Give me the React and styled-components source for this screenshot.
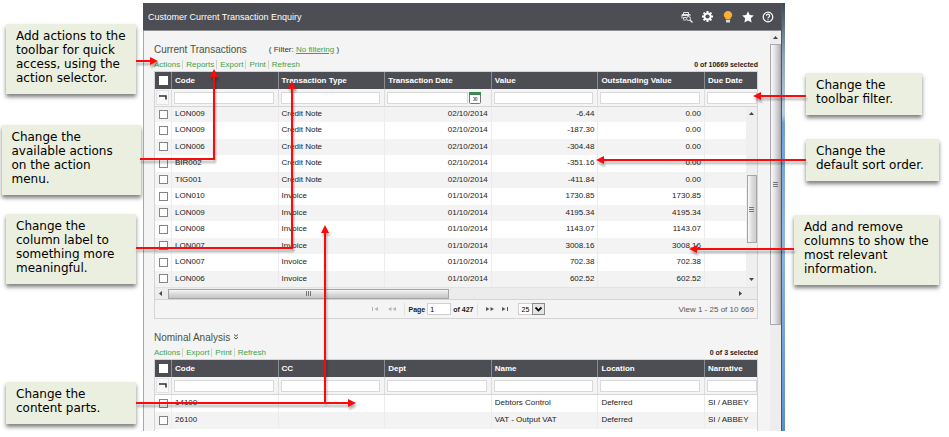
import React from "react";
import styled, { createGlobalStyle } from "styled-components";

const GlobalStyle = createGlobalStyle`
  * {
    box-sizing: border-box;
  }
  body {
    margin: 0;
    background: #fff;
    color: #222;
    font-family: "Liberation Sans", Arial, sans-serif;
    font-size: 8px;
  }
  input, select, button {
    font: inherit;
    margin: 0;
  }
`;

const Page = styled.div`
  position: relative;
  display: grid;
  grid-template-columns: 143px minmax(0, 1fr) 164px;
  padding-top: 3px;
`;

// Notes on both sides of the window

const Notes = styled.aside`
  display: flex;
  flex-direction: column;
  align-items: ${(p) => (p.$side === "left" ? "center" : "flex-start")};
  padding: ${(p) => (p.$side === "left" ? "21px 1px 0 0" : "70px 0 0 9px")};
`;

const Note = styled.p`
  width: ${(p) => p.$width}px;
  margin: ${(p) => p.$gap || 0}px 0 0 ${(p) => p.$indent || 0}px;
  padding: 5px 0 9px 10px;
  background: #ebefdf;
  color: #000;
  box-shadow: 0 3px 4px rgba(0, 0, 0, 0.5);
  font-family: "DejaVu Sans", Verdana, sans-serif;
  font-size: 12px;
  line-height: 14px;
  white-space: pre-line;
`;

const Arrows = styled.svg`
  position: absolute;
  top: 0;
  ${(p) => p.$side}: 0;
  overflow: visible;
  pointer-events: none;
  fill: none;
  stroke: #fa0a0a;
  stroke-width: 2;
  filter: drop-shadow(1px 3px 1px rgba(0, 0, 0, 0.3));

  polygon {
    fill: #fa0a0a;
    stroke: none;
  }
`;

// Application window

const Window = styled.main`
  display: flex;
  min-width: 0;
  background: #f4f4f4;
`;

const WindowMain = styled.div`
  flex: 1;
  min-width: 0;
`;

const WindowEdge = styled.div`
  width: 4px;
  border-left: 1px solid #4c5a68;
  background: linear-gradient(#3f4a55, #8fa3b8 12%, #b9cde2 26%, #6f9fd0 28%, #8fb6de 55%, #5f90c4);
`;

const TitleBar = styled.header`
  display: flex;
  align-items: center;
  justify-content: space-between;
  height: 28px;
  padding: 0 7px 0 5px;
  border-bottom: 1px solid #8d8e91;
  background: #4d4e53;
`;

const Title = styled.h1`
  margin: 0;
  color: #fff;
  font-size: 9px;
  font-weight: normal;
`;

const Tools = styled.div`
  display: flex;
  align-items: center;
  gap: 8px;
`;

const ToolButton = styled.button`
  display: flex;
  padding: 0;
  border: 0;
  background: none;
`;

const Body = styled.div`
  display: flex;
  border-left: 1px solid #a8a8a8;
`;

const Content = styled.div`
  flex: 1;
  min-width: 0;
  padding: 10px 12px 0 10px;
`;

const Part = styled.section`
  margin-bottom: ${(p) => p.$space || 0}px;
`;

const PartHeading = styled.div`
  display: flex;
  align-items: center;
  gap: 22px;
  height: 16px;
`;

const PartTitle = styled.h2`
  display: flex;
  align-items: center;
  gap: 3px;
  margin: 0;
  color: #4b5238;
  font-size: 10px;
  font-weight: normal;
`;

const Filter = styled.span`
  color: #333;

  a {
    color: #3fa34a;
  }
`;

const Toolbar = styled.div`
  display: flex;
  align-items: center;
  height: 14px;
`;

const ActionLink = styled.a`
  color: #3fa34a;
  text-decoration: none;
  line-height: 9px;

  & + & {
    margin-left: 2px;
    padding-left: 3px;
    border-left: 1px solid #d0d0d0;
  }
`;

const Selected = styled.span`
  margin-left: auto;
  font-size: 7px;
  font-weight: bold;
`;

const GridBox = styled.div`
  position: relative;
  border: 1px solid #d4d4d4;
  border-bottom-width: ${(p) => (p.$open ? 0 : 1)}px;
  padding-bottom: ${(p) => (p.$open ? 2 : 0)}px;
  background: ${(p) => (p.$open ? "#fff" : "#f4f4f4")};
`;

const TableArea = styled.div`
  position: relative;
`;

const Table = styled.table`
  width: 100%;
  table-layout: fixed;
  border-collapse: separate;
  border-spacing: 0;
`;

const HeadCell = styled.th`
  height: 17px;
  padding: 0 3px;
  overflow: hidden;
  border-right: 1px solid #8b8c90;
  background: #4d4e53;
  color: #fff;
  text-align: left;
  white-space: nowrap;

  &:first-child {
    padding: 0 0 0 4px;
  }
  &:last-child {
    border-right: 0;
  }
`;

const FilterCell = styled.td`
  height: 18px;
  padding: 0 4px 0 2px;
  border-right: 1px solid #dcdcdc;
  border-bottom: 1px solid #d4d4d4;
  background: #f4f4f4;

  &:first-child {
    padding: 0 0 0 1px;
  }
  &:last-child {
    padding-right: 0;
    border-right: 0;
  }
`;

const FilterField = styled.div`
  display: flex;
  align-items: center;
  gap: 1px;
  padding-right: ${(p) => (p.$date ? 6 : 0)}px;
`;

const FilterInput = styled.input`
  flex: 1;
  min-width: 0;
  height: 12px;
  padding: 0 2px;
  border: 1px solid #d9d9d9;
  background: #fff;
`;

const ClearButton = styled.button`
  display: flex;
  align-items: center;
  justify-content: center;
  width: 13px;
  height: 15px;
  padding: 0;
  border: 1px solid #e2e2e2;
  background: #f8f8f8;
`;

const Row = styled.tr`
  height: ${(p) => (p.$clipped ? 15 : 17)}px;
  background: ${(p) => (p.$shaded ? "#f3f3f3" : "#fff")};

  &:nth-child(2n + 3) {
    height: 16px;
  }
`;

const Cell = styled.td`
  padding: 0 3px 2px;
  border-right: 1px solid #ececec;
  text-align: ${(p) => (p.$right ? "right" : "left")};
  line-height: 9px;
  white-space: nowrap;

  &:first-child {
    padding: 0 0 1px 4px;
  }
  &:last-child {
    border-right: 0;
  }
`;

const Check = styled.input`
  display: block;
  appearance: none;
  width: 9px;
  height: 9px;
  border: 1px solid ${(p) => (p.$head ? "#fff" : "#858585")};
  background: #fff;
`;

// Scrollbars

const PageScroll = styled.div`
  display: flex;
  flex-direction: column;
  align-items: center;
  width: 11px;
  padding-top: 4px;
  background: #ededed;
`;

const PageThumb = styled.div`
  display: flex;
  align-items: center;
  justify-content: center;
  width: 11px;
  height: 71%;
  margin-top: 4px;
  border: 1px solid #a9a9ad;
  background: linear-gradient(90deg, #fafafa, #e2e2e4 45%, #b5b5bb);
`;

const GridScroll = styled.div`
  position: absolute;
  top: 35px;
  right: 0;
  bottom: 0;
  display: flex;
  flex-direction: column;
  align-items: center;
  width: 11px;
  padding: 4px 0 5px;
  background: #efefef;
`;

const GridThumb = styled.div`
  display: flex;
  align-items: center;
  justify-content: center;
  width: 10px;
  height: 68px;
  margin: auto 0 34px;
  border: 1px solid #a5a5a5;
  background: linear-gradient(90deg, #fafafa, #dcdcdc 50%, #cfcfcf);
`;

const SideScroll = styled.div`
  display: flex;
  align-items: center;
  height: 13px;
  padding: 0 14px 0 3px;
  border-top: 1px solid #e2e2e2;
  border-bottom: 1px solid #d4d4d4;
  background: #ececec;
`;

const SideThumb = styled.div`
  display: flex;
  align-items: center;
  justify-content: center;
  width: 48%;
  height: 10px;
  margin: 0 auto 0 5px;
  border: 1px solid #a5a5a5;
  background: linear-gradient(#f6f6f6, #dadada 50%, #c6c6c8);
`;

// Pager

const Pager = styled.div`
  display: grid;
  grid-template-columns: 1fr auto 1fr;
  align-items: center;
  height: 18px;
  padding: 0 3px 0 8px;
`;

const PagerControls = styled.div`
  grid-column: 2;
  display: flex;
  align-items: center;
  gap: 8px;
`;

const PagerButton = styled.button`
  display: flex;
  padding: 0;
  border: 0;
  background: none;
  color: ${(p) => (p.disabled ? "#b5b5b5" : "#555")};
`;

const PageField = styled.label`
  display: flex;
  align-items: center;
  gap: 2px;
  height: 13px;
  padding: 0 4px;
  border: solid #e2e2e2;
  border-width: 0 1px;
  font-size: 7px;
  font-weight: bold;
`;

const PageInput = styled.input`
  width: 24px;
  height: 12px;
  padding: 0 2px;
  border: 1px solid #d0d0d0;
  background: #fff;
  font-weight: normal;
`;

const SizeBox = styled.div`
  display: grid;
  align-items: center;
  justify-items: end;
  width: 27px;
  height: 12px;

  > * {
    grid-area: 1 / 1;
  }
  svg {
    pointer-events: none;
  }
`;

const SizeSelect = styled.select`
  appearance: none;
  width: 100%;
  height: 12px;
  padding: 0 2px;
  border: 1px solid #cfcfcf;
  border-radius: 0;
  background: #fff;
  font-size: 7px;
`;

const ViewCount = styled.span`
  justify-self: end;
  color: #555;
`;

// Drawings

const SelectArrow = () => (
  <svg width="13" height="12" viewBox="0 0 13 12">
    <rect x="0.5" y="0.5" width="12" height="11" fill="#e6e6e6" stroke="#8a8a8a" />
    <path d="M3.5 4.5 6.5 7.5 9.5 4.5" fill="none" stroke="#111" strokeWidth="1.8" />
  </svg>
);

const PrintPreviewIcon = () => (
  <svg width="12" height="12" viewBox="0 0 12 12" fill="none" stroke="#e4e4e4">
    <path d="M2.500 3V1.500h5V3M1 7.500v-4h8V5" />
    <path d="M1 4.500h7M2.500 8.500v-2h2.500M2.500 9h2.500" />
    <circle cx="7.500" cy="7.500" r="2" fill="#4d4e53" />
    <path d="M9 9l2.500 2.500" strokeWidth="1.500" />
  </svg>
);

const GearIcon = () => (
  <svg width="13" height="13" viewBox="0 0 13 13">
    <g stroke="#fff" strokeWidth="2">
      <path d="M6.500 1v11M1 6.500h11M2.600 2.600l7.800 7.800M10.400 2.600l-7.800 7.800" />
    </g>
    <circle cx="6.500" cy="6.500" r="4" fill="#fff" />
    <circle cx="6.500" cy="6.500" r="2.100" fill="#4d4e53" />
  </svg>
);

const BulbIcon = () => (
  <svg width="12" height="12" viewBox="0 0 12 12">
    <path d="M6 0a4.200 4.200 0 0 0-4.200 4.200C1.800 6 3.600 6.600 3.800 8.500h4.400C8.400 6.600 10.200 6 10.200 4.200A4.200 4.200 0 0 0 6 0z" fill="#fbb034" />
    <path d="M4 9h4v2.500H4z" fill="#d8d8d8" />
  </svg>
);

const StarIcon = () => (
  <svg width="12" height="12" viewBox="0 0 12 12">
    <path d="M6 .3l1.700 3.700 4.100.5-3 2.800.8 4.200L6 9.400l-3.600 2.100.8-4.200-3-2.800L4.300 4z" fill="#fff" />
  </svg>
);

const HelpIcon = () => (
  <svg width="12" height="12" viewBox="0 0 12 12" fill="none" stroke="#fff">
    <circle cx="6" cy="6" r="4.800" strokeWidth="1.200" />
    <path d="M4.400 4.800a1.600 1.600 0 1 1 2.300 1.400C6.200 6.500 6 6.700 6 7.300M6 8.200v1.100" strokeWidth="1.200" />
  </svg>
);

const ClearIcon = () => (
  <svg width="8" height="5" viewBox="0 0 8 5">
    <path d="M0 1h7v3.500" fill="none" stroke="#333" strokeWidth="1.600" />
  </svg>
);

const CalendarIcon = () => (
  <svg width="12" height="12" viewBox="0 0 12 12">
    <rect x="0.5" y="0.500" width="11" height="11" rx="1" fill="#fff" stroke="#777" />
    <path d="M0 0h12v3H0z" fill="#3c8a50" />
    <path d="M4 5.500h1.500v3H4M6.500 5.500H8v3H6.500z" fill="none" stroke="#777" strokeWidth="0.800" />
  </svg>
);

const CollapseIcon = () => (
  <svg width="6" height="6" viewBox="0 0 6 6" fill="none" stroke="#4b5238">
    <path d="M1 .5l2 1.800L5 .5M1 3.200L3 5l2-1.800" />
  </svg>
);

const Grip = ({ wide }) => (
  <svg width="5" height="5" viewBox="0 0 5 5" stroke="#777">
    <path d={wide ? "M.5 0v5M2.500 0v5M4.500 0v5" : "M0 .5h5M0 2.500h5M0 4.500h5"} />
  </svg>
);

const trianglePaths = {
  up: "M0 4h5L2.500 1z",
  down: "M0 1h5L2.500 4z",
  left: "M4 0v5L1 2.500z",
  right: "M1 0v5l3-2.500z",
};

const Triangle = ({ to }) => (
  <svg width="5" height="5" viewBox="0 0 5 5" fill="#444">
    <path d={trianglePaths[to]} />
  </svg>
);

const pagerPaths = {
  first: "M0 1h1v4H0zM6 1v4L2.500 3z",
  prev: "M3.500 1v4L0 3zM8 1v4L4.500 3z",
  next: "M0 1v4l3.500-2zM4.500 1v4L8 3z",
  last: "M0 1v4l3.500-2zM5 1h1v4H5z",
};

const PagerIcon = ({ to }) => (
  <svg width="8" height="6" viewBox="0 0 8 6" fill="currentColor">
    <path d={pagerPaths[to]} />
  </svg>
);

const transactionColumns = ["Code", "Transaction Type", "Transaction Date", "Value", "Outstanding Value", "Due Date"];

const transactions = [
  ["LON009", "Credit Note", "02/10/2014", "-6.44", "0.00", ""],
  ["LON009", "Credit Note", "02/10/2014", "-187.30", "0.00", ""],
  ["LON006", "Credit Note", "02/10/2014", "-304.48", "0.00", ""],
  ["BIR002", "Credit Note", "02/10/2014", "-351.16", "0.00", ""],
  ["TIG001", "Credit Note", "02/10/2014", "-411.84", "0.00", ""],
  ["LON010", "Invoice", "01/10/2014", "1730.85", "1730.85", ""],
  ["LON009", "Invoice", "01/10/2014", "4195.34", "4195.34", ""],
  ["LON008", "Invoice", "01/10/2014", "1143.07", "1143.07", ""],
  ["LON007", "Invoice", "01/10/2014", "3008.16", "3008.16", ""],
  ["LON007", "Invoice", "01/10/2014", "702.38", "702.38", ""],
  ["LON006", "Invoice", "01/10/2014", "602.52", "602.52", ""],
];

const nominalColumns = ["Code", "CC", "Dept", "Name", "Location", "Narrative"];

const nominals = [
  ["14100", "", "", "Debtors Control", "Deferred", "SI / ABBEY"],
  ["26100", "", "", "VAT - Output VAT", "Deferred", "SI / ABBEY"],
];

// A scrolled table starts with a clipped, shaded row
function DataTable({ label, columns, rows, rightFrom, scrolled }) {
  return (
    <Table aria-label={label}>
      <colgroup>
        <col style={{ width: 17 }} />
        {columns.map((name, i) => (
          <col key={name} style={i === columns.length - 1 ? { width: 52 } : undefined} />
        ))}
      </colgroup>
      <thead>
        <tr>
          <HeadCell>
            <Check type="checkbox" $head aria-label="Select all" />
          </HeadCell>
          {columns.map((name) => (
            <HeadCell key={name}>{name}</HeadCell>
          ))}
        </tr>
        <tr>
          <FilterCell>
            <ClearButton aria-label="Clear filters">
              <ClearIcon />
            </ClearButton>
          </FilterCell>
          {columns.map((name) => (
            <FilterCell key={name}>
              <FilterField $date={name === "Transaction Date"}>
                <FilterInput type="text" aria-label={"Filter " + name} />
                {name === "Transaction Date" && <CalendarIcon />}
              </FilterField>
            </FilterCell>
          ))}
        </tr>
      </thead>
      <tbody>
        {rows.map((row, r) => (
          <Row key={r} $clipped={scrolled && r === 0} $shaded={(r % 2 === 0) === scrolled}>
            <Cell>
              <Check type="checkbox" aria-label={"Select " + row[0]} />
            </Cell>
            {row.map((value, c) => (
              <Cell key={c} $right={c >= rightFrom}>
                {value}
              </Cell>
            ))}
          </Row>
        ))}
      </tbody>
    </Table>
  );
}

function Actions({ names, selected }) {
  return (
    <Toolbar>
      {names.map((name) => (
        <ActionLink key={name} href="#">
          {name}
        </ActionLink>
      ))}
      <Selected>{selected}</Selected>
    </Toolbar>
  );
}

function App() {
  return (
    <Page>
      <GlobalStyle />
      <Notes $side="left">
        <Note $width={130}>{"Add actions to the\ntoolbar for quick\naccess, using the\naction selector."}</Note>
        <Note $width={139} $gap={31}>{"Change the\navailable actions\non the action\nmenu."}</Note>
        <Note $width={130} $gap={19}>{"Change the\ncolumn label to\nsomething more\nmeaningful."}</Note>
        <Note $width={130} $gap={98}>{"Change the\ncontent parts."}</Note>
      </Notes>

      <Window>
        <WindowMain>
          <TitleBar>
            <Title>Customer Current Transaction Enquiry</Title>
            <Tools>
              <ToolButton aria-label="Print preview"><PrintPreviewIcon /></ToolButton>
              <ToolButton aria-label="Settings"><GearIcon /></ToolButton>
              <ToolButton aria-label="Hints"><BulbIcon /></ToolButton>
              <ToolButton aria-label="Favourites"><StarIcon /></ToolButton>
              <ToolButton aria-label="Help"><HelpIcon /></ToolButton>
            </Tools>
          </TitleBar>
          <Body>
            <Content>
              <Part $space={10}>
                <PartHeading>
                  <PartTitle>Current Transactions</PartTitle>
                  <Filter>
                    ( Filter: <a href="#">No filtering</a> )
                  </Filter>
                </PartHeading>
                <Actions names={["Actions", "Reports", "Export", "Print", "Refresh"]} selected="0 of 10669 selected" />
                <GridBox>
                  <TableArea>
                    <DataTable
                      label="Current Transactions"
                      columns={transactionColumns}
                      rows={transactions}
                      rightFrom={2}
                      scrolled
                    />
                    <GridScroll>
                      <Triangle to="up" />
                      <GridThumb><Grip /></GridThumb>
                      <Triangle to="down" />
                    </GridScroll>
                  </TableArea>
                  <SideScroll>
                    <Triangle to="left" />
                    <SideThumb><Grip wide /></SideThumb>
                    <Triangle to="right" />
                  </SideScroll>
                  <Pager>
                    <PagerControls>
                      <PagerButton disabled aria-label="First page"><PagerIcon to="first" /></PagerButton>
                      <PagerButton disabled aria-label="Previous page"><PagerIcon to="prev" /></PagerButton>
                      <PageField>
                        Page <PageInput type="text" defaultValue="1" /> of 427
                      </PageField>
                      <PagerButton aria-label="Next page"><PagerIcon to="next" /></PagerButton>
                      <PagerButton aria-label="Last page"><PagerIcon to="last" /></PagerButton>
                      <SizeBox>
                        <SizeSelect aria-label="Rows per page" defaultValue="25">
                          <option>25</option>
                          <option>50</option>
                        </SizeSelect>
                        <SelectArrow />
                      </SizeBox>
                    </PagerControls>
                    <ViewCount>View 1 - 25 of 10 669</ViewCount>
                  </Pager>
                </GridBox>
              </Part>

              <Part>
                <PartHeading>
                  <PartTitle>
                    Nominal Analysis <CollapseIcon />
                  </PartTitle>
                </PartHeading>
                <Actions names={["Actions", "Export", "Print", "Refresh"]} selected="0 of 3 selected" />
                <GridBox $open>
                  <DataTable
                    label="Nominal Analysis"
                    columns={nominalColumns}
                    rows={nominals}
                    rightFrom={9}
                    scrolled={false}
                  />
                </GridBox>
              </Part>
            </Content>
            <PageScroll>
              <Triangle to="up" />
              <PageThumb><Grip /></PageThumb>
            </PageScroll>
          </Body>
        </WindowMain>
        <WindowEdge />
      </Window>

      <Notes $side="right">
        <Note $width={116} $indent={12}>{"Change the\ntoolbar filter."}</Note>
        <Note $width={133} $gap={24} $indent={12}>{"Change the\ndefault sort order."}</Note>
        <Note $width={145} $gap={34}>{"Add and remove\ncolumns to show the\nmost relevant\ninformation."}</Note>
      </Notes>

      <Arrows $side="left" width="360" height="430" viewBox="0 0 360 430">
        <path d="M136 61H151M140 159H214V76M136 248H292V88M136 403H349M325 403V232" />
        <polygon points="158,61 150,57 150,65" />
        <polygon points="214,69 210,77 218,77" />
        <polygon points="292,81 288,89 296,89" />
        <polygon points="356,403 348,399 348,407" />
        <polygon points="325,225 321,233 329,233" />
      </Arrows>
      <Arrows $side="right" width="360" height="430" viewBox="589 0 360 430">
        <path d="M806 96H760M806 160H603M794 249H696" />
        <polygon points="753,96 761,92 761,100" />
        <polygon points="596,160 604,156 604,164" />
        <polygon points="689,249 697,245 697,253" />
      </Arrows>
    </Page>
  );
}

export default App;
